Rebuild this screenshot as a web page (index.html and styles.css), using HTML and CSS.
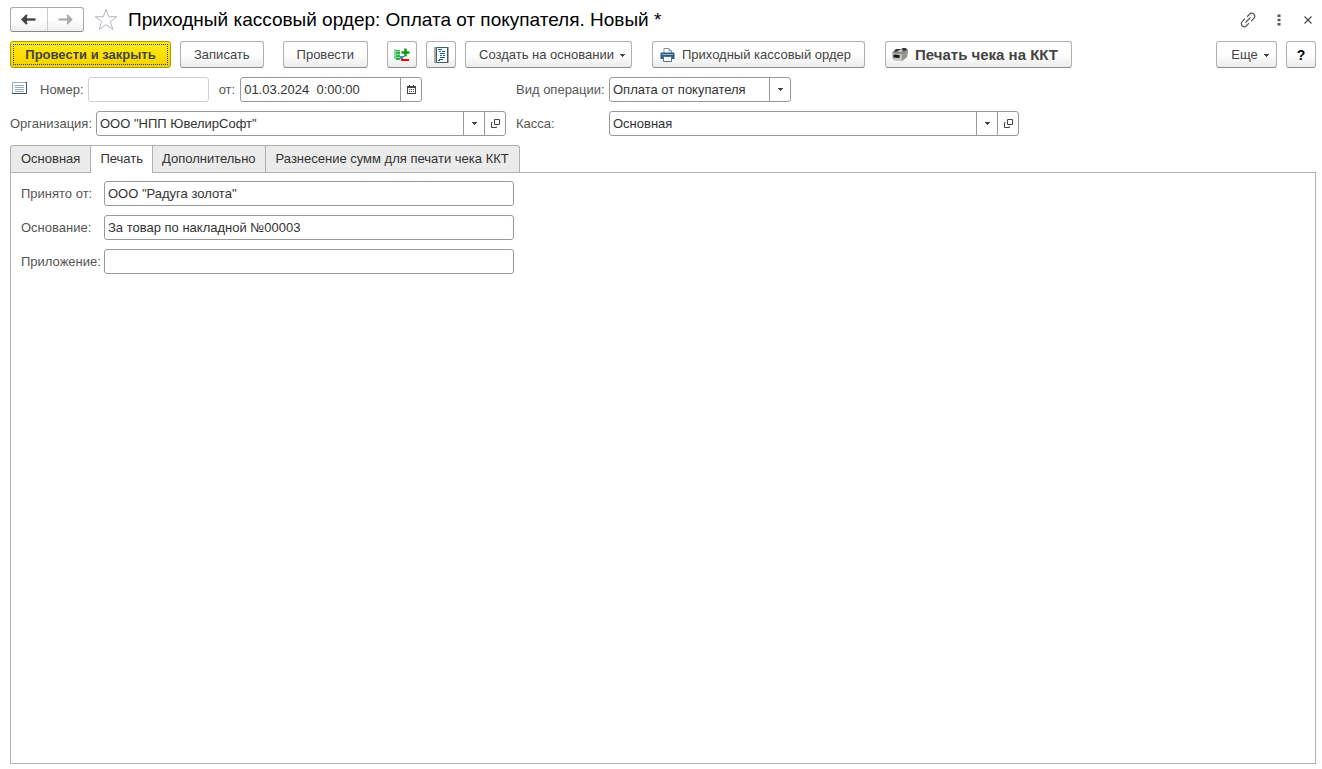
FILE: index.html
```html
<!DOCTYPE html>
<html lang="ru">
<head>
<meta charset="utf-8">
<title>Приходный кассовый ордер</title>
<link rel="stylesheet" href="styles.css">
</head>
<body>
<svg class="defs" aria-hidden="true">
  <symbol id="caret" viewBox="0 0 5 3"><path d="M0 0h5v1H0zM1 1h3v1H1zM2 2h1v1H2z" fill="#444"/></symbol>
  <symbol id="open" viewBox="0 0 9 9"><path d="M3.500 .5h5v5h-5zM1.500 3.500H.5v5h5v-1" fill="none" stroke="#444"/></symbol>
</svg>
<header class="titlebar">
  <div class="history">
    <button class="history-btn" aria-label="Назад"><svg width="15" height="11" viewBox="0 0 15 11"><path d="M14.500 5.500H3" fill="none" stroke="#444" stroke-width="2.400"/><path d="M6 1L1.500 5.500 6 10" fill="none" stroke="#444" stroke-width="2.200"/><path d="M2 5.500l4-3v6z" fill="#444"/></svg></button>
    <button class="history-btn" aria-label="Вперед"><svg width="15" height="11" viewBox="0 0 15 11"><path d="M.5 5.500H12" fill="none" stroke="#aaa" stroke-width="2.200"/><path d="M9 1l4.500 4.500L9 10" fill="none" stroke="#aaa" stroke-width="1.800"/><path d="M13 5.500l-4-3v6z" fill="#aaa"/></svg></button>
  </div>
  <button class="plain star" aria-label="В избранное"><svg width="24" height="23" viewBox="0 0 24 23"><path d="M12 1.200l2.700 7.500h8.100l-6.500 4.800 2.500 7.900L12 16.600l-6.800 4.800 2.500-7.900L1.200 8.700h8.100z" fill="#fff" stroke="#b3b9c1"/></svg></button>
  <h1 class="title">Приходный кассовый ордер: Оплата от покупателя. Новый *</h1>
  <button class="plain link" aria-label="Ссылка"><svg width="16" height="16" viewBox="0 0 16 16"><g fill="none" stroke="#555" stroke-width="1.200" transform="rotate(-45 8 8)"><path d="M6.500 5H2.800a3 3 0 0 0 0 6h3.700M9.500 5h3.700a3 3 0 0 1 0 6H9.500M4.500 8h7"/></g></svg></button>
  <button class="plain dots" aria-label="Меню"><svg width="4" height="12" viewBox="0 0 4 12"><path d="M.5.500h3v2.500h-3zM.5 4.700h3v2.500h-3zM.5 9h3v2.500h-3z" fill="#555"/></svg></button>
  <button class="plain close" aria-label="Закрыть"><svg width="8" height="8" viewBox="0 0 8 8"><path d="M.5.500l7 7M7.500.500l-7 7" stroke="#444" stroke-width="1.100"/></svg></button>
</header>

<div class="commands">
  <button class="btn primary">Провести и закрыть</button>
  <button class="btn">Записать</button>
  <button class="btn apart">Провести</button>
  <button class="btn icon apart" aria-label="Движения документа"><svg width="18" height="16" viewBox="0 0 18 16"><path d="M1 2h2v10H1z" fill="#76d68c"/><path d="M3 3h4v10H3z" fill="#27b34a"/><path d="M1 2.500h2M1 5.500h2M1 8.500h2M3 4.500h4M3 7.500h4M3 10.500h4" stroke="#b5ecc0" stroke-width=".7"/><path d="M7 9h5l-2 2v3H8v-2H7z" fill="#3d8bd0"/><path d="M8.500 5.500h8M12.500 1.500v8" stroke="#079b0b" stroke-width="2.400"/><path d="M8 12h8v2H8z" fill="#f00"/></svg></button>
  <button class="btn icon" aria-label="Журнал"><svg width="15" height="16" viewBox="0 0 15 16"><path d="M0 0h15v16H0z" fill="#aaa"/><path d="M2.500.500h11v15h-11z" fill="#fff" stroke="#456"/><path d="M4 2.500h4M5 4.500h2M8 4.500h3M6 6.500h5M6 8.500h2M9 8.500h2M6 10.500h5M5 12.500h4M4 13.500h2" stroke="#12608b"/></svg></button>
  <button class="btn">Создать на основании<svg class="caret" width="5" height="3"><use href="#caret"/></svg></button>
  <button class="btn print"><svg width="15" height="14" viewBox="0 0 15 14"><path d="M4 5V.500h5L11.500 3v2" fill="#fff" stroke="#7794ac"/><path d="M9 .5V3h2.500" fill="none" stroke="#7794ac"/><path d="M1.500 4.500h12a1 1 0 0 1 1 1V11H.5V5.500a1 1 0 0 1 1-1z" fill="#2c5a86"/><path d="M2 6.500h11" stroke="#93b2cc"/><path d="M3.500 8.500h8v5h-8z" fill="#fff" stroke="#4d7396"/></svg>Приходный кассовый ордер</button>
  <button class="btn receipt"><svg width="16" height="14" viewBox="0 0 16 14"><path d="M0 5l4-4 11 0 1 2-1 6-5 4-9-1z" fill="#b4b4ac"/><path d="M0 5l10 1v7l-9-1z" fill="#c4c4bc"/><path d="M10 6l6-4-1 7-5 4z" fill="#96968e"/><path d="M0 5l4-4h11l1 1-6 4z" fill="#85857f"/><path d="M4 1h4l-1 2-5 1zM10 0h4l1 2-4 1z" fill="#333"/><path d="M5 3l4-1 2 1-3 1z" fill="#ddd"/><path d="M1.500 6.500l6 .5v3l-6-.5z" fill="#151515"/></svg>Печать чека на ККТ</button>
  <span class="spacer"></span>
  <button class="btn more">Еще<svg class="caret" width="5" height="3"><use href="#caret"/></svg></button>
  <button class="btn icon help">?</button>
</div>

<main class="form">
  <div class="head">
    <div class="half line">
      <svg class="state" width="15" height="12" viewBox="0 0 15 12"><path d="M.5.500h14v11H.5z" fill="#fff" stroke="#8db0c8"/><path d="M14.500 0v11.500H0" fill="none" stroke="#444f58"/><path d="M3 3.500h9M3 5.500h9M3 7.500h9M3 9.500h9" stroke="#93abc0"/></svg>
      <label for="num">Номер:</label>
      <div class="field number"><input id="num" type="text"></div>
      <label class="from" for="date">от:</label>
      <div class="field date"><input id="date" type="text" value="01.03.2024  0:00:00"><button class="cell" aria-label="Календарь"><svg width="9" height="9" viewBox="0 0 9 9"><path d="M0 1h9v8H0z" fill="#444"/><path d="M2 0h1v1H2zM6 0h1v1H6z" fill="#444"/><path d="M1 3h7v5H1z" fill="#fff"/><path d="M2 4h1v1H2zM4 4h1v1H4zM6 4h1v1H6zM2 6h1v1H2zM4 6h1v1H4zM6 6h1v1H6z" fill="#444"/></svg></button></div>
    </div>
    <div class="half line">
      <label class="cap2" for="kind">Вид операции:</label>
      <div class="field kind"><select id="kind"><option>Оплата от покупателя</option></select><span class="cell"><svg width="5" height="3"><use href="#caret"/></svg></span></div>
    </div>
    <div class="half line">
      <label class="cap1" for="org">Организация:</label>
      <div class="field wide"><input id="org" type="text" value='ООО "НПП ЮвелирСофт"'><button class="cell" aria-label="Выбрать"><svg width="5" height="3"><use href="#caret"/></svg></button><button class="cell" aria-label="Открыть"><svg width="9" height="9"><use href="#open"/></svg></button></div>
    </div>
    <div class="half line">
      <label class="cap2" for="cash">Касса:</label>
      <div class="field wide"><input id="cash" type="text" value="Основная"><button class="cell" aria-label="Выбрать"><svg width="5" height="3"><use href="#caret"/></svg></button><button class="cell" aria-label="Открыть"><svg width="9" height="9"><use href="#open"/></svg></button></div>
    </div>
  </div>

  <div class="tabs" role="tablist">
    <button class="tab" role="tab">Основная</button>
    <button class="tab active" role="tab" aria-selected="true">Печать</button>
    <button class="tab" role="tab">Дополнительно</button>
    <button class="tab" role="tab">Разнесение сумм для печати чека ККТ</button>
  </div>
  <section class="panel" role="tabpanel">
    <div class="line"><label class="cap3" for="payer">Принято от:</label><div class="field wide"><input id="payer" type="text" value='ООО "Радуга золота"'></div></div>
    <div class="line"><label class="cap3" for="reason">Основание:</label><div class="field wide"><input id="reason" type="text" value="За товар по накладной №00003"></div></div>
    <div class="line"><label class="cap3" for="annex">Приложение:</label><div class="field wide"><input id="annex" type="text"></div></div>
  </section>
</main>
</body>
</html>
```
FILE: styles.css
```css
* { box-sizing: border-box; }

body {
  margin: 0;
  min-height: 100vh;
  padding: 7px 6px 5px 10px;
  display: flex;
  flex-direction: column;
  background: #fff;
  color: #333;
  font: 13px/16px "Liberation Sans", Arial, sans-serif;
}

button, input, select { font: inherit; color: inherit; margin: 0; }
svg { display: block; flex: none; }
.defs { position: absolute; width: 0; height: 0; }

.titlebar { display: flex; align-items: center; height: 25px; }
.history {
  display: flex;
  width: 74px;
  height: 25px;
  border: 1px solid #aaa;
  border-bottom-color: #888;
  border-radius: 3px;
  background: linear-gradient(#fff 50%, #eee);
}
.history-btn {
  flex: 1;
  display: flex;
  align-items: center;
  justify-content: center;
  padding: 0;
  border: 0;
  background: none;
}
.history-btn + .history-btn { border-left: 1px solid #ccc; }
.plain {
  display: flex;
  align-items: center;
  justify-content: center;
  padding: 0;
  border: 0;
  background: none;
}
.star { margin: 0 10px; }
.title { flex: 1; margin: 0; font-size: 19px; line-height: 24px; font-weight: 400; color: #000; }
.dots { margin: 0 22px 0 20px; }
.close { margin-right: 4px; }
.link, .dots { padding-right: 1px; }

.commands { display: flex; gap: 9px; margin-top: 9px; }
.btn {
  display: flex;
  align-items: center;
  justify-content: center;
  height: 27px;
  padding: 0 13px;
  border: 1px solid #b0b0b0;
  border-bottom-color: #8c8c8c;
  border-radius: 3px;
  background: linear-gradient(#fff 50%, #ebebeb);
  color: #444;
  white-space: nowrap;
}
.apart { margin-left: 10px; }
.primary {
  min-width: 161px;
  border-color: #b09a00;
  background: linear-gradient(#ffea1f, #ffe000 50%, #eed000);
  font-weight: 700;
  outline: 1px dotted #2a3a9a;
  outline-offset: -4px;
}
.icon { width: 30px; padding: 0; }
.caret { margin: 2px 0 0 6px; }
.btn:has(.caret) { padding-right: 6px; }
.print { padding-left: 7px; gap: 7px; margin-left: 11px; }
.receipt { padding-left: 6px; gap: 7px; margin-left: 11px; font-weight: 700; font-size: 15px; }
.spacer { flex: 1; }
.more { min-width: 61px; }
.help { font-weight: 700; font-size: 14px; color: #000; }

.form { flex: 1; display: flex; flex-direction: column; margin-top: 9px; }
.head {
  display: grid;
  grid-template-columns: 496px 1fr;
  gap: 9px 10px;
}
.line { display: flex; align-items: center; }
label { color: #555; white-space: nowrap; }
.state { margin: 0 13px 4px 2px; }
.cap1 { width: 86px; }
.cap2 { width: 93px; }
.cap3 { width: 83px; }
.from { margin: 0 5px 0 10px; }

.field {
  display: flex;
  height: 25px;
  border: 1px solid #999;
  border-radius: 3px;
  background: #fff;
}
.field input, .field select {
  flex: 1;
  min-width: 0;
  padding: 0 3px;
  border: 0;
  outline: 0;
  background: none;
  appearance: none;
}
.cell {
  display: flex;
  align-items: center;
  justify-content: center;
  width: 21px;
  padding: 0;
  border: 0;
  border-left: 1px solid #999;
  background: none;
}
.number { width: 121px; margin-left: 4px; border-color: #d0d0d0; }
.date { width: 182px; }
.kind { width: 182px; }
.wide { width: 410px; }

.tabs { display: flex; margin-top: 9px; }
.tab {
  height: 27px;
  padding: 0 10px;
  border: 1px solid #b0b0b0;
  border-bottom: 0;
  background: #ebebeb;
}
.tab + .tab { border-left: 0; padding: 0 9px; }
.tab:first-child { border-top-left-radius: 3px; }
.tab:last-child { border-top-right-radius: 3px; }
.tab.active { height: 28px; margin-bottom: -1px; padding-bottom: 1px; background: #fff; z-index: 1; }
.tabs .tab:last-child { padding: 0 10px; }
.panel {
  flex: 1;
  display: flex;
  flex-direction: column;
  gap: 9px;
  padding: 8px 10px;
  border: 1px solid #b0b0b0;
}
```
